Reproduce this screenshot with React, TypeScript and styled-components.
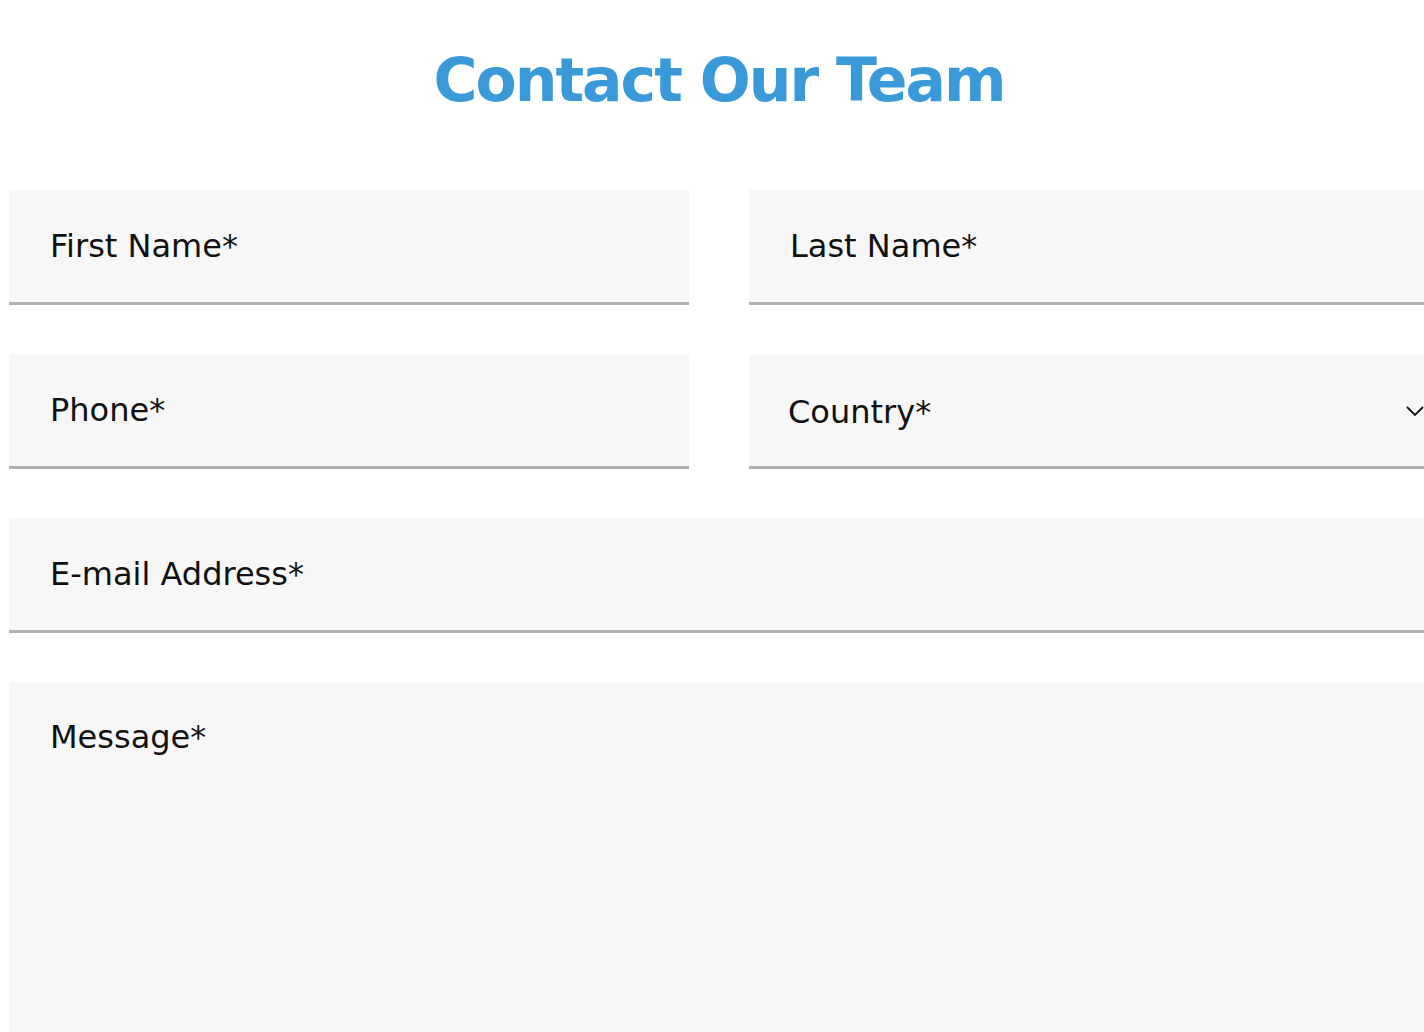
import { createGlobalStyle } from 'styled-components';
import styled from 'styled-components';

const GlobalStyle = createGlobalStyle`
    html, body {
        margin: 0;
        padding: 0;
        background: #ffffff;
        overflow: hidden;
    }
    body {
        font-family: "DejaVu Sans", "Open Sans", sans-serif;
    }
`;

const fields = [
    { name: 'firstName', label: 'First Name*' },
    { name: 'lastName', label: 'Last Name*' },
];

export default function App() {
    return (
        <>
            <GlobalStyle />
            <Page>
                <Title>Contact Our Team</Title>
                <Form>
                    <Row>
                        {fields.map((f) => (
                            <Input key={f.name} name={f.name} placeholder={f.label} />
                        ))}
                    </Row>
                    <Row>
                        <Input name="phone" placeholder="Phone*" />
                        <SelectWrap>
                            <Select defaultValue="">
                                <option value="" disabled>Country*</option>
                                <option value="us">United States</option>
                                <option value="uk">United Kingdom</option>
                            </Select>
                            <Chevron viewBox="0 0 18 10" aria-hidden>
                                <path d="M1 1l8 8 8-8" fill="none" stroke="#111" strokeWidth="1.8" />
                            </Chevron>
                        </SelectWrap>
                    </Row>
                    <Input name="email" placeholder="E-mail Address*" />
                    <Message name="message" placeholder="Message*" />
                </Form>
            </Page>
        </>
    );
}

const Page = styled.div`
    width: 1420px;
    padding: 0 0 0 9px;
`;

const Title = styled.h1`
    margin: 0;
    padding: 46px 0 0;
    height: 190px;
    box-sizing: border-box;
    text-align: center;
    color: #3a9ad9;
    font-family: "DejaVu Sans", sans-serif;
    font-weight: 700;
    font-size: 60px;
    letter-spacing: -2px;
    line-height: 68px;
`;

const Form = styled.form`
    display: flex;
    flex-direction: column;
    gap: 49px;
`;

const Row = styled.div`
    display: grid;
    grid-template-columns: 680px 680px;
    column-gap: 60px;
`;

const fieldBase = `
    box-sizing: border-box;
    width: 100%;
    border: none;
    border-bottom: 3px solid #b0b0b0;
    background: #f7f7f7;
    font-family: "DejaVu Sans", sans-serif;
    font-size: 32px;
    color: #111;
    outline: none;
    &::placeholder {
        color: #111;
        opacity: 1;
    }
`;

const Input = styled.input`
    ${fieldBase}
    height: 115px;
    padding: 0 41px;
`;

const SelectWrap = styled.div`
    position: relative;
`;

const Select = styled.select`
    ${fieldBase}
    height: 115px;
    padding: 4px 39px 0;
    appearance: none;
    -webkit-appearance: none;
    border-radius: 0;
`;

const Chevron = styled.svg`
    position: absolute;
    left: 657px;
    top: 52px;
    width: 18px;
    height: 10px;
    pointer-events: none;
`;

const Message = styled.textarea`
    ${fieldBase}
    height: 380px;
    padding: 36px 41px;
    resize: vertical;
    line-height: 38px;
`;
